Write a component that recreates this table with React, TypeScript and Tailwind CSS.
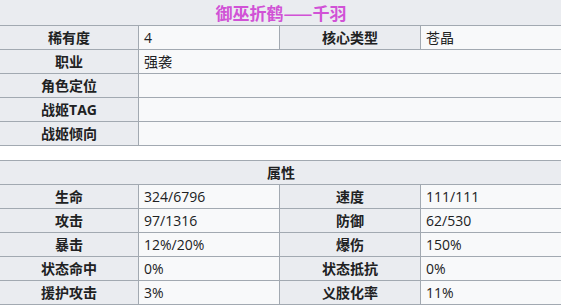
import React from "react";

const FONT = { fontFamily: '"Open Sans", "Noto Sans CJK SC", sans-serif' };
const CJK = { fontFamily: '"Noto Sans CJK SC", sans-serif' };

type Row = [string, string, string?, string?];

const basic: Row[] = [
  ["稀有度", "4", "核心类型", "苍晶"],
  ["职业", "强袭"],
  ["角色定位", ""],
  ["战姬TAG", ""],
  ["战姬倾向", ""],
];

const stats: Row[] = [
  ["生命", "324/6796", "速度", "111/111"],
  ["攻击", "97/1316", "防御", "62/530"],
  ["暴击", "12%/20%", "爆伤", "150%"],
  ["状态命中", "0%", "状态抵抗", "0%"],
  ["援护攻击", "3%", "义肢化率", "11%"],
];

const label =
  "flex h-6 items-center justify-center border-r border-b border-[#a2a9b1] bg-[#eaecf0] text-[14px] font-bold text-[#202122]";
const value =
  "flex h-6 items-center border-r border-b border-[#a2a9b1] bg-[#f8f9fa] pl-[5px] text-[14px] text-[#202122]";

function Rows({ rows }: { rows: Row[] }) {
  return (
    <>
      {rows.map((r) =>
        r.length > 2 ? (
          <React.Fragment key={r[0]}>
            <div className={label}>{r[0]}</div>
            <div className={value}>{r[1]}</div>
            <div className={label}>{r[2]}</div>
            <div className={value}>{r[3]}</div>
          </React.Fragment>
        ) : (
          <React.Fragment key={r[0]}>
            <div className={label}>{r[0]}</div>
            <div className={`${value} col-span-3`}>{r[1]}</div>
          </React.Fragment>
        )
      )}
    </>
  );
}

export default function App() {
  return (
    <div className="h-[308px] w-[561px] overflow-hidden bg-white" style={FONT}>
      <div className="grid w-[562px] grid-cols-[139px_141px_141px_141px]">
        <div
          className="col-span-4 flex h-[26px] items-center justify-center border-b border-[#a2a9b1] bg-[#eaecf0] text-[17px] font-bold text-[#d152d6]"
          style={CJK}
        >
          御巫折鹤——千羽
        </div>
        <Rows rows={basic} />
      </div>
      <div className="mt-[14px] grid w-[562px] grid-cols-[139px_141px_141px_141px] border-t border-[#a2a9b1]">
        <div className="col-span-4 flex h-6 items-center justify-center border-b border-[#a2a9b1] bg-[#eaecf0] text-[14px] font-bold text-[#202122]">
          属性
        </div>
        <Rows rows={stats} />
      </div>
    </div>
  );
}
